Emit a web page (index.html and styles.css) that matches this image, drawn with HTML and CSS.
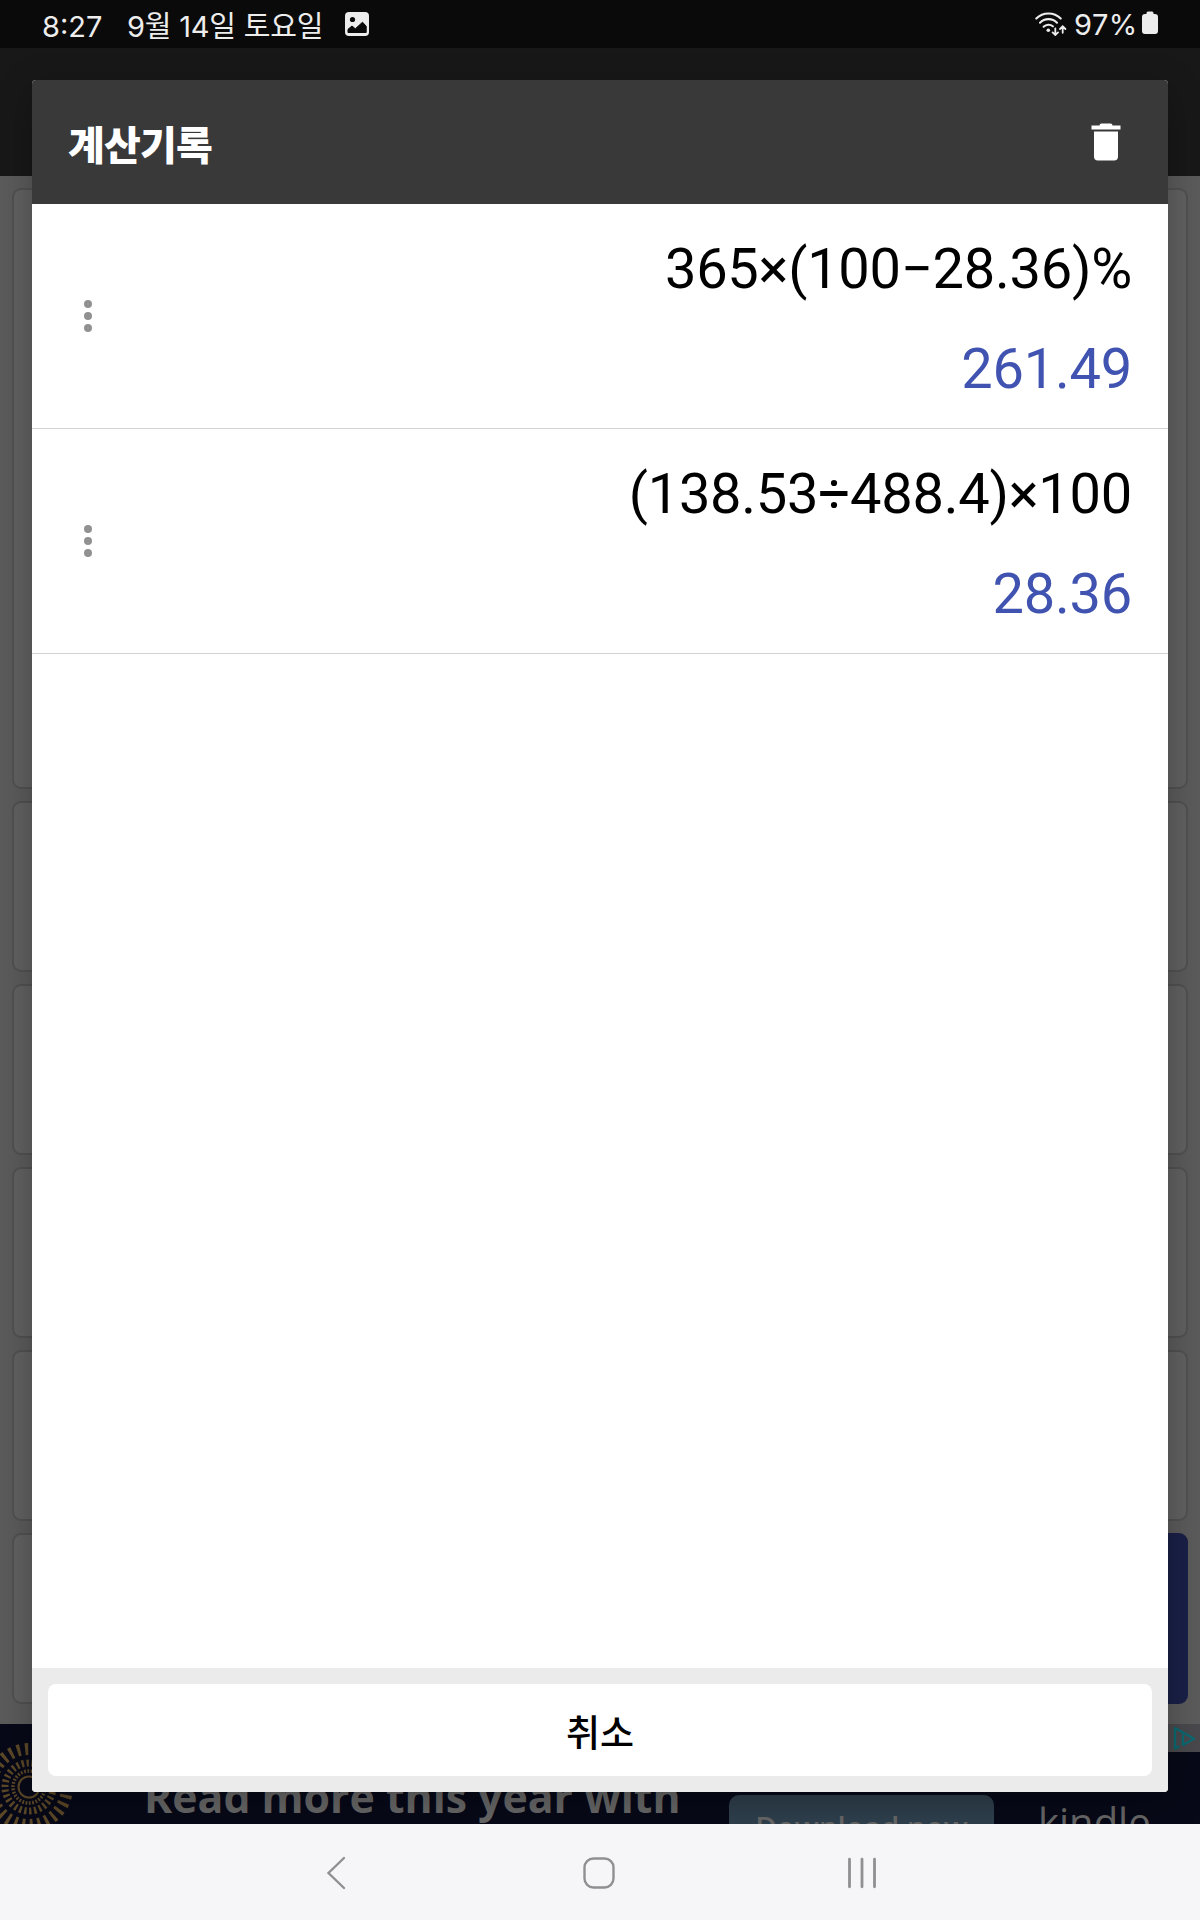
FILE: index.html
```html
<!DOCTYPE html>
<html lang="ko">
<head>
  <meta charset="UTF-8" />
  <meta name="viewport" content="width=device-width, initial-scale=1.0"/>
  <title>계산기록</title>
  <link rel="stylesheet" href="styles.css">
</head>
<body>

  <!-- STATUS BAR -->
  <header class="status-bar">
    <span class="clock">8:27</span>
    <span class="date">9월 14일 토요일</span>
    <svg class="picture-icon" width="24" height="24" viewBox="0 0 24 24">
      <rect width="24" height="24" rx="4" fill="#ededed"/>
      <circle cx="7.5" cy="7.5" r="2.6" fill="#0a0a0a"/>
      <path d="M3 20.5v-3.2l4-3.3 3.3 2.8 7.2-6.6 3.7 4v6.3z" fill="#0a0a0a" stroke="#0a0a0a" stroke-linejoin="round"/>
    </svg>
    <svg class="wifi-icon" width="32" height="24" viewBox="0 0 32 24">
      <g fill="none" stroke="#ededed" stroke-width="2.1" stroke-linecap="round">
        <path d="M1.3 6.6a17 17 0 0 1 24.4 0"/>
        <path d="M5 10.7a12 12 0 0 1 17 0"/>
        <path d="M8.6 14.7a7 7 0 0 1 9.3-.4"/>
        <path d="M20.3 16.3v6.3M17.6 20.4l2.7 2.6 2.7-2.6" stroke-width="1.8"/>
        <path d="M27.7 20.8v-6.3M25 17l2.7-2.7 2.7 2.7" stroke-width="1.8"/>
      </g>
      <circle cx="13.3" cy="18.3" r="1.8" fill="#ededed"/>
    </svg>
    <span class="percent">97%</span>
    <svg class="battery-icon" width="16" height="24" viewBox="0 0 16 24">
      <path d="M4.5 3V2A1.5 1.5 0 0 1 6 .5h4A1.5 1.5 0 0 1 11.5 2v1H13a3 3 0 0 1 3 3v14a3 3 0 0 1-3 3H3a3 3 0 0 1-3-3V6a3 3 0 0 1 3-3z" fill="#ededed"/>
    </svg>
  </header>

  <div class="app-bar"></div>

  <!-- CALCULATOR, DIMMED BEHIND THE DIALOG -->
  <main class="calculator">
    <div class="panel display"></div>
    <div class="panel"></div>
    <div class="panel"></div>
    <div class="panel"></div>
    <div class="panel"></div>
    <div class="last-row">
      <div class="panel"></div>
      <div class="panel equals"></div>
    </div>
  </main>

  <!-- AD BANNER -->
  <aside class="ad">
    <svg class="sunburst" width="96" height="100" viewBox="0 0 96 100">
      <g fill="none" stroke="#5c4827">
        <circle cx="29" cy="63" r="10.5" stroke-width="2"/>
        <circle cx="29" cy="63" r="16" stroke-width="3.5" pathLength="120" stroke-dasharray="2.2 1.8"/>
        <circle cx="29" cy="63" r="24" stroke-width="7" pathLength="120" stroke-dasharray="1.9 2.1"/>
        <circle cx="29" cy="63" r="38" stroke-width="12" pathLength="120" stroke-dasharray="1.6 2.4"/>
      </g>
    </svg>
    <p class="ad-text">Read more this year with</p>
    <span class="ad-button">Download now</span>
    <span class="ad-brand">kindle</span>
    <span class="ad-choice">
      <svg width="24" height="24" viewBox="0 0 24 24" fill="none" stroke="#0b6870" stroke-linejoin="round" stroke-linecap="round">
        <path d="M6.5 20.8 3 22.5V2l19 10.8-11 6.2V10" stroke-width="2.4"/>
        <path d="M10.7 6.8v.4" stroke-width="2.6"/>
      </svg>
    </span>
  </aside>

  <!-- SYSTEM NAVIGATION -->
  <nav class="nav-bar">
    <span class="nav-item">
      <svg width="34" height="34" viewBox="0 0 34 34"><path d="M25 2 9.5 17 25 32"/></svg>
    </span>
    <span class="nav-item">
      <svg width="34" height="34" viewBox="0 0 34 34"><rect x="2.5" y="2.5" width="29" height="29" rx="9"/></svg>
    </span>
    <span class="nav-item">
      <svg width="34" height="34" viewBox="0 0 34 34"><path d="M4.5 3.2v27.6M17 3.2v27.6M29.5 3.2v27.6" stroke-width="2.8"/></svg>
    </span>
  </nav>

  <!-- HISTORY DIALOG -->
  <section class="dialog">
    <div class="dialog-header">
      <h1>계산기록</h1>
      <svg width="30" height="38" viewBox="0 0 30 38" fill="#fff">
        <path d="M.5 2.5h8a2 2 0 0 1 2-2h9a2 2 0 0 1 2 2h8v4H.5z"/>
        <path d="M3 8.5h24v25a4 4 0 0 1-4 4H7a4 4 0 0 1-4-4z"/>
      </svg>
    </div>

    <ul class="history">
      <li class="entry">
        <span class="dots"><i></i><i></i><i></i></span>
        <div class="calc">
          <p class="expression">365×(100−28.36)%</p>
          <p class="result">261.49</p>
        </div>
      </li>
      <li class="entry">
        <span class="dots"><i></i><i></i><i></i></span>
        <div class="calc">
          <p class="expression">(138.53÷488.4)×100</p>
          <p class="result">28.36</p>
        </div>
      </li>
    </ul>

    <div class="dialog-footer">
      <button class="cancel">취소</button>
    </div>
  </section>

</body>
</html>
```
FILE: styles.css
```css
* {
  box-sizing: border-box;
}

body {
  margin: 0;
  position: relative;
  display: flex;
  flex-direction: column;
  width: 1200px;
  height: 1920px;
  overflow: hidden;
  font-family: Roboto, 'Noto Sans CJK KR', sans-serif;
  background: #5b5b5b;
}

h1, p, ul {
  margin: 0;
  padding: 0;
}

.status-bar {
  display: flex;
  align-items: center;
  flex: none;
  height: 48px;
  padding: 0 42px;
  background: #0a0a0a;
  color: #ededed;
  font-family: Inter, 'Noto Sans CJK KR', sans-serif;
  font-size: 29px;
  line-height: 44px;
  white-space: nowrap;
}

.clock {
  width: 85px;
  padding-top: 6px;
}

.date {
  width: 218px;
  padding-top: 6px;
  letter-spacing: -0.2px;
}

.wifi-icon {
  margin-left: auto;
}

.percent {
  width: 67px;
  padding-top: 2px;
  padding-left: 7px;
  letter-spacing: 0.5px;
}

.battery-icon {
  margin-left: 8px;
  margin-bottom: 2px;
}

.app-bar {
  flex: none;
  height: 128px;
  background: #181818;
}

.calculator {
  flex: none;
  display: flex;
  flex-direction: column;
  gap: 12px;
  height: 1548px;
  padding: 12px;
}

.panel {
  flex: none;
  height: 171px;
  border: 2px solid #515151;
  border-radius: 9px;
  background: #616161;
}

.panel.display {
  height: 601px;
}

.last-row {
  display: grid;
  grid-template-columns: 3fr 1fr;
  gap: 12px;
}

.panel.equals {
  border: none;
  background: #1a2047;
}

.ad {
  position: relative;
  flex: none;
  display: flex;
  height: 100px;
  overflow: hidden;
  background: #070918;
  color: #676767;
  white-space: nowrap;
}

.sunburst {
  flex: none;
}

.ad-text {
  width: 582px;
  margin-left: 48px;
  padding-top: 43px;
  font: bold 42.8px/60px 'Open Sans', sans-serif;
}

.ad-button {
  width: 265px;
  height: 80px;
  margin-top: 71px;
  margin-left: 3px;
  padding-top: 10px;
  border-radius: 10px;
  background: #2f3f4d;
  font: 600 29.5px/44px 'Open Sans', sans-serif;
  text-align: center;
}

.ad-brand {
  margin-left: 44px;
  padding-top: 73px;
  font: 40px/50px 'Open Sans', sans-serif;
}

/* sits on top of the banner corner */
.ad-choice {
  position: absolute;
  top: 0;
  right: 0;
  width: 32px;
  height: 28px;
  padding: 2px 0 0 4px;
  background: #49494d;
}

.nav-bar {
  position: relative;
  z-index: 2;
  flex: none;
  display: flex;
  justify-content: center;
  align-items: center;
  height: 96px;
  padding: 2px 2px 0 0;
  background: #f6f6f8;
}

.nav-item {
  display: flex;
  justify-content: center;
  width: 263px;
}

.nav-item svg {
  fill: none;
  stroke: #909092;
  stroke-width: 2.4;
  stroke-linecap: round;
}

.dialog {
  position: absolute;
  top: 80px;
  left: 32px;
  display: flex;
  flex-direction: column;
  width: 1136px;
  height: 1712px;
  border-radius: 4px;
  overflow: hidden;
  background: #fff;
  box-shadow: 0 10px 36px rgba(0,0,0,0.28);
}

.dialog-header {
  display: flex;
  justify-content: space-between;
  align-items: center;
  flex: none;
  height: 124px;
  padding: 0 47px 0 36px;
  background: #393939;
}

.dialog-header h1 {
  padding-top: 2px;
  color: #fff;
  font: 900 40px/60px 'Noto Sans CJK KR', sans-serif;
  letter-spacing: -0.8px;
}

.history {
  flex: 1;
  list-style-type: none;
}

.entry {
  display: flex;
  justify-content: space-between;
  align-items: center;
  height: 225px;
  padding: 0 36px 0 52px;
  border-bottom: 1px solid #d3d3d3;
}

.dots {
  display: flex;
  flex-direction: column;
  gap: 4px;
}

.dots i {
  width: 8px;
  height: 8px;
  border-radius: 50%;
  background: #919191;
}

.calc {
  padding-top: 6px;
  font-size: 56px;
  line-height: 100px;
  letter-spacing: -0.25px;
  text-align: right;
}

.expression {
  color: #000;
}

.result {
  color: #4053b0;
}

.dialog-footer {
  flex: none;
  height: 124px;
  padding: 16px;
  background: #ebebeb;
}

.cancel {
  width: 100%;
  height: 92px;
  padding: 2px 0 0;
  border: none;
  border-radius: 8px;
  background: #fff;
  color: #000;
  font: 500 37px/52px 'Noto Sans CJK KR', sans-serif;
}
```
